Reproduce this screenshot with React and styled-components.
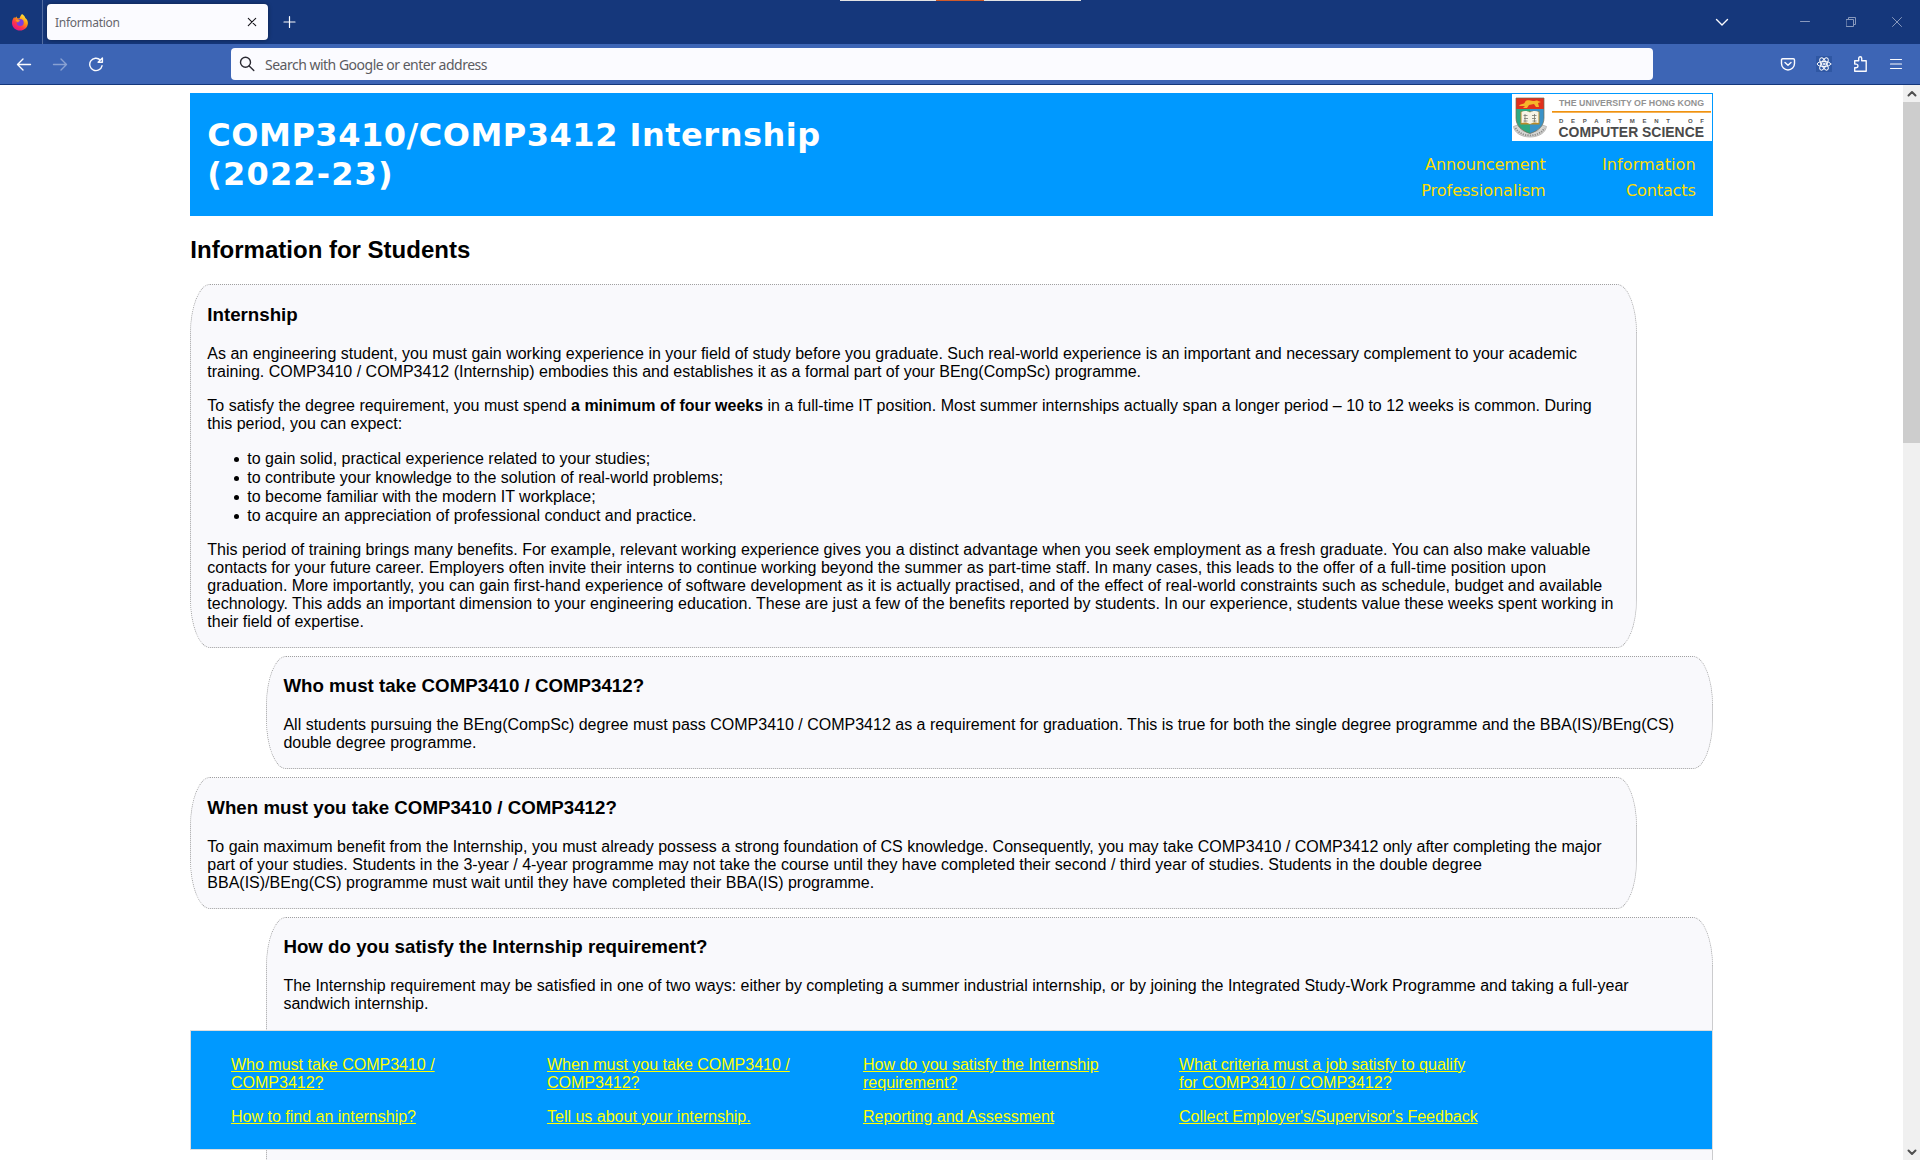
import React from "react";
import styled, { createGlobalStyle } from "styled-components";

const Global = createGlobalStyle`
  html, body { margin: 0; padding: 0; background: #fff; overflow: hidden; }
  *, *::before, *::after { box-sizing: border-box; }
`;

const sans = `"Liberation Sans", Arial, sans-serif`;
const ui = `"Noto Sans", "Open Sans", sans-serif`;
const wide = `"DejaVu Sans", Verdana, sans-serif`;

const Window = styled.div`
  width: 1920px;
  height: 1160px;
  display: flex;
  flex-direction: column;
  overflow: hidden;
  position: relative;
  font-family: ${sans};
  color: #000;
`;

const TabBar = styled.div`
  height: 44px;
  flex: none;
  background: #15377b;
  display: flex;
  align-items: center;
`;

const Pinned = styled.div`
  width: 43px;
  height: 44px;
  border-right: 1px solid #536da1;
  display: flex;
  align-items: center;
  padding-left: 11px;
`;

const Tab = styled.div`
  width: 221px;
  height: 36px;
  margin-left: 4px;
  padding: 0 11px 0 8px;
  border-radius: 4px;
  background: #fbfbff;
  box-shadow: 0 0 4px rgba(0, 0, 0, 0.4);
  display: flex;
  align-items: center;
  justify-content: space-between;
`;

const TabTitle = styled.span`
  font: 12px/16px ${ui};
  color: #66666d;
  letter-spacing: -0.3px;
  padding-top: 2px;
`;

const NewTab = styled.div`
  margin-left: 13px;
  width: 18px;
  height: 18px;
`;

const WindowStrip = styled.div`
  position: absolute;
  top: 0;
  left: 840px;
  width: 241px;
  height: 1px;
  background: linear-gradient(to right, #e3e3e3 96px, #cf5a2a 96px 144px, #e3e3e3 144px);
`;

const Controls = styled.div`
  margin-left: auto;
  display: flex;
  align-items: center;
  padding-right: 15px;
`;

const Control = styled.div`
  width: 16px;
  height: 16px;
  margin-left: ${(p) => p.$gap || 0}px;
`;

const Toolbar = styled.div`
  height: 41px;
  flex: none;
  background: #3d65b5;
  border-bottom: 1px solid #15377b;
  display: flex;
  align-items: center;
  padding: 0 16px;
`;

const NavButtons = styled.div`
  width: 215px;
  display: flex;
  gap: 20px;
`;

const UrlBar = styled.div`
  width: 1422px;
  height: 32px;
  border-radius: 4px;
  background: #fbfbff;
  display: flex;
  align-items: center;
  padding-left: 8px;
  gap: 10px;
`;

const Placeholder = styled.span`
  font: 14px/20px ${ui};
  letter-spacing: -0.5px;
  color: #5b5b61;
  padding-top: 2px;
`;

const ToolIcons = styled.div`
  margin-left: auto;
  display: flex;
  gap: 20px;
`;

const Icon = styled.svg`
  display: block;
  fill: none;
  stroke: ${(p) => p.$c || "#fbfbfe"};
  stroke-width: ${(p) => p.$w || 1.4};
  stroke-linecap: round;
  stroke-linejoin: round;
  opacity: ${(p) => p.$o || 1};
`;

const View = styled.div`
  flex: 1;
  min-height: 0;
  display: flex;
`;

const Page = styled.main`
  flex: 1;
  overflow: hidden;
  padding: 8px 190.3px 0;
`;

const Scrollbar = styled.div`
  width: 17px;
  background: #f0f0f0;
  display: flex;
  flex-direction: column;
  justify-content: space-between;
`;

const Arrow = styled.div`
  height: 17px;
  display: flex;
  align-items: center;
  justify-content: center;
`;

const Thumb = styled.div`
  height: 341px;
  background: #cdcdcd;
  margin-bottom: auto;
`;

const Banner = styled.header`
  height: 123px;
  background: #0099ff;
  padding: 1px 1px 1px 17px;
  display: flex;
  justify-content: space-between;
`;

const Title = styled.h1`
  margin: 22.4px 0 0;
  font: bold 32px/39px ${wide};
  color: #fff;
  white-space: nowrap;
`;

const TitleLine = styled.span`
  display: block;
  letter-spacing: ${(p) => p.$ls}px;
`;

const BannerSide = styled.div`
  display: flex;
  flex-direction: column;
  align-items: flex-end;
`;

const Logo = styled.svg`
  display: block;
  background: #fff;
  overflow: visible;
`;

const Menu = styled.nav`
  display: grid;
  grid-template-columns: 150px 150px;
  padding: 11px 16px 0 0;
  text-align: right;
`;

const MenuLink = styled.a`
  font: 16px/26px ${wide};
  letter-spacing: ${(p) => p.$ls || 0}px;
  color: #ffdd00;
  white-space: nowrap;
`;

const PageTitle = styled.h2`
  margin: 20px 0 21px;
  font: bold 24px/27px ${sans};
`;

const Card = styled.section`
  display: flow-root;
  width: 95%;
  margin: 0 0 8px ${(p) => (p.$right ? "5%" : "0")};
  padding: 0 16px;
  border: 1px dotted #a0a0a0;
  border-radius: 20px / 50px;
  background: #f9f9fc;
  height: ${(p) => (p.$h ? `${p.$h}px` : "auto")};

  h3 {
    margin: 18.7px 0;
    font: bold 18.72px/22.2px ${sans};
  }
  p {
    margin: 16px 0;
    font: 16px/18px ${sans};
    white-space: nowrap;
  }
  ul {
    margin: 16px 0;
    padding-left: 40px;
    list-style: none;
  }
  li {
    font: 16px/19px ${sans};
  }
  li::before {
    content: "";
    display: inline-block;
    width: 5px;
    height: 5px;
    margin: 0 8px 0 -13px;
    border-radius: 50%;
    background: #000;
    vertical-align: 2px;
  }
`;

const Quick = styled.nav`
  position: absolute;
  left: 190px;
  bottom: 10px;
  width: 1523px;
  height: 120px;
  padding: 25px 40px 0;
  background: #0099ff;
  border: 1px solid #dddddd;
  display: grid;
  grid-template-columns: repeat(4, 316px);
  row-gap: 16px;
  align-content: start;

  a {
    font: 16px/18px ${sans};
    color: #ffff00;
    text-decoration: underline;
    white-space: nowrap;
  }
`;

const QuickItem = styled.div`
  font: 16px/18px ${sans};
`;

const links = [
  ["Who must take COMP3410 /", "COMP3412?"],
  ["When must you take COMP3410 /", "COMP3412?"],
  ["How do you satisfy the Internship", "requirement?"],
  ["What criteria must a job satisfy to qualify", "for COMP3410 / COMP3412?"],
  ["How to find an internship?"],
  ["Tell us about your internship."],
  ["Reporting and Assessment"],
  ["Collect Employer's/Supervisor's Feedback"],
];

const Lines = ({ of }) =>
  of.map((t, i) => (
    <React.Fragment key={i}>
      {i > 0 && <br />}
      {t}
    </React.Fragment>
  ));

const Firefox = () => (
  <svg width="18" height="18" viewBox="0 0 18 18">
    <defs>
      <linearGradient id="ff" x1="0.85" y1="0.05" x2="0.25" y2="0.95">
        <stop offset="0" stopColor="#fff044" />
        <stop offset="0.4" stopColor="#ff980e" />
        <stop offset="0.7" stopColor="#ff3647" />
        <stop offset="1" stopColor="#e31587" />
      </linearGradient>
    </defs>
    <path d="M11 1c2 1.500 3 2.600 3.300 4 1.700 1.200 2.700 3.200 2.600 5.300C16.700 14.600 13.300 17.600 9 17.600S1 14.400 1 10c0-2.400.9-4.500 2.300-6l.5 1.200L5.400 3.600l.9 1.700 2 .2C9.300 4.400 9.300 2.400 11 1z" fill="url(#ff)" />
    <circle cx="9.200" cy="9.600" r="3.500" fill="#7a3ee0" />
    <path d="M4.800 7.200c1.800-.9 3.600-.4 4.300.9-1 .1-1.700.6-1.800 1.300-1-.2-2-.9-2.500-2.200z" fill="#ff9a1a" />
  </svg>
);

const Shield = () => (
  <g>
    <path d="M1.500 32.500c1 6.500 8 10.500 16.500 10.500s15.500-4 16.500-10.500l-4-1.500-5 6H10.500l-5-6z" fill="#d6d6d4" stroke="#9a9a98" strokeWidth="0.600" />
    <path d="M3.500 34c3 5 8 7.300 14.500 7.300S29.500 39 32.500 34" fill="none" stroke="#8d8d8b" strokeDasharray="1.300 1.100" strokeWidth="1.800" />
    <path d="M4 4h14v35.500C10 37 4 32 4 24z" fill="#2fa882" />
    <path d="M18 4h14v20c0 8-6 13-14 15.500z" fill="#3a92c8" />
    <path d="M4 4h28v11H4z" fill="#e0301e" />
    <path d="M7 12c2-3 5-1 6-4 2-3 5-1 8-1s4-1 5 0l3 1-3 1 1 4h-3l-2-3-5 1-2 3h-4l2-2z" fill="#f6b62a" />
    <path d="M8.500 17.500h19v13h-19z" fill="#b98a2a" />
    <path d="M9.500 18c3-1.500 6-1 8.500.6 2.500-1.600 5.500-2.100 8.500-.6v11c-3-1-6-.6-8.500 1-2.500-1.600-5.500-2-8.500-1z" fill="#f7f3e6" />
    <path d="M11.500 21.500h4M12 24.500h4M11.500 27h4M20 21.500h4.500M20 24.500h4M20.500 27h4M13 20v8M22.500 20v8" stroke="#77776f" strokeWidth="0.800" />
    <path d="M4 4h28v20c0 8-6 13-14 15.500C10 37 4 32 4 24z" fill="none" stroke="#6d6a50" strokeWidth="0.700" />
  </g>
);

const DeptLogo = () => (
  <Logo width="200" height="47" viewBox="0 0 200 47">
    <Shield />
    <text x="47" y="12.300" fontFamily="Liberation Sans" fontWeight="bold" fontSize="8.800" fill="#929292" textLength="145" lengthAdjust="spacingAndGlyphs">THE UNIVERSITY OF HONG KONG</text>
    <rect x="40" y="17" width="159" height="1.700" fill="#f0920f" />
    <text x="47" y="28.600" fontFamily="Liberation Sans" fontWeight="bold" fontSize="6" fill="#555" textLength="111" lengthAdjust="spacing">DEPARTMENT</text>
    <text x="176" y="28.600" fontFamily="Liberation Sans" fontWeight="bold" fontSize="6" fill="#555" textLength="16" lengthAdjust="spacing">OF</text>
    <text x="46.500" y="43" fontFamily="Liberation Sans" fontWeight="bold" fontSize="14.600" fill="#4a4a4a" textLength="145.500" lengthAdjust="spacingAndGlyphs">COMPUTER SCIENCE</text>
  </Logo>
);

export default function App() {
  return (
    <Window>
      <Global />
      <TabBar>
        <Pinned><Firefox /></Pinned>
        <Tab>
          <TabTitle>Information</TabTitle>
          <Icon width="10" height="10" viewBox="0 0 10 10" $c="#15141a" $w={1.1}><path d="M1.300 1.300l7.400 7.400M8.700 1.300l-7.400 7.400" /></Icon>
        </Tab>
        <NewTab>
          <Icon width="18" height="18" viewBox="0 0 18 18" $w={1.2}><path d="M8.500 3.500v11M3 9h11" /></Icon>
        </NewTab>
        <Controls>
          <Control><Icon width="16" height="16" viewBox="0 0 16 16" $w={1.4}><path d="M2.500 5.500L8 11l5.500-5.500" /></Icon></Control>
          <Control $gap={67}><Icon width="16" height="16" viewBox="0 0 16 16" $o={0.5} $w={1}><path d="M3.500 7.500h9" /></Icon></Control>
          <Control $gap={30}><Icon width="16" height="16" viewBox="0 0 16 16" $o={0.5} $w={1}><path d="M3.500 5.500h7v7h-7zM5.500 5.500v-2h7v7h-2" /></Icon></Control>
          <Control $gap={30}><Icon width="16" height="16" viewBox="0 0 16 16" $o={0.5} $w={1}><path d="M3.500 3.500l9 9M12.500 3.500l-9 9" /></Icon></Control>
        </Controls>
      </TabBar>
      <WindowStrip />
      <Toolbar>
        <NavButtons>
          <Icon width="16" height="16" viewBox="0 0 16 16"><path d="M14.500 8.500H1.500M7 3L1.500 8.500 7 14" /></Icon>
          <Icon width="16" height="16" viewBox="0 0 16 16" $o={0.4}><path d="M1.500 8.500h13M9 3l5.500 5.500L9 14" /></Icon>
          <Icon width="16" height="16" viewBox="0 0 16 16"><path d="M14 9.800A6.200 6.200 0 1 1 12.300 4M14.400 2v4.300h-4.300z" /></Icon>
        </NavButtons>
        <UrlBar>
          <Icon width="16" height="16" viewBox="0 0 16 16" $c="#2b2a33" $w={1.4}><circle cx="6.500" cy="6.300" r="5" /><path d="M10.200 10l4.600 4.600" /></Icon>
          <Placeholder>Search with Google or enter address</Placeholder>
        </UrlBar>
        <ToolIcons>
          <Icon width="16" height="16" viewBox="0 0 16 16"><path d="M2.700 2.700h10.600a1.200 1.200 0 0 1 1.200 1.200v3.600a6.500 6.500 0 0 1-13 0V3.900a1.200 1.200 0 0 1 1.200-1.200zM5 6.500l3 2.800 3-2.800" /></Icon>
          <Icon width="16" height="16" viewBox="0 0 16 16" $w={1}>
            <rect width="16" height="16" fill="#2f57a3" stroke="none" />
            <ellipse cx="8" cy="8" rx="6.800" ry="2.600" />
            <ellipse cx="8" cy="8" rx="6.800" ry="2.600" transform="rotate(60 8 8)" />
            <ellipse cx="8" cy="8" rx="6.800" ry="2.600" transform="rotate(120 8 8)" />
            <circle cx="8" cy="8" r="1" />
          </Icon>
          <Icon width="16" height="16" viewBox="0 0 16 16"><path d="M2.700 15.200v-3.500h1.500a1.800 1.800 0 0 0 0-3.600H2.700V4.700h4V2.300a1.500 1.500 0 0 1 3 0v2.400h4.500v10.500z" /></Icon>
          <Icon width="16" height="16" viewBox="0 0 16 16" $w={1.2}><path d="M2.500 3.500h11M2.500 8h11M2.500 12.500h11" /></Icon>
        </ToolIcons>
      </Toolbar>
      <View>
        <Page>
          <Banner>
            <Title>
              <TitleLine $ls={0.52}>COMP3410/COMP3412 Internship</TitleLine>
              <TitleLine $ls={1.15}>(2022-23)</TitleLine>
            </Title>
            <BannerSide>
              <DeptLogo />
              <Menu>
                <MenuLink $ls={-0.1}>Announcement</MenuLink>
                <MenuLink $ls={0.1}>Information</MenuLink>
                <MenuLink>Professionalism</MenuLink>
                <MenuLink $ls={-0.1}>Contacts</MenuLink>
              </Menu>
            </BannerSide>
          </Banner>
          <PageTitle>Information for Students</PageTitle>
          <Card>
            <h3>Internship</h3>
            <p><Lines of={[
              "As an engineering student, you must gain working experience in your field of study before you graduate. Such real-world experience is an important and necessary complement to your academic",
              "training. COMP3410 / COMP3412 (Internship) embodies this and establishes it as a formal part of your BEng(CompSc) programme.",
            ]} /></p>
            <p>To satisfy the degree requirement, you must spend <b>a minimum of four weeks</b> in a full-time IT position. Most summer internships actually span a longer period – 10 to 12 weeks is common. During<br />this period, you can expect:</p>
            <ul>
              <li>to gain solid, practical experience related to your studies;</li>
              <li>to contribute your knowledge to the solution of real-world problems;</li>
              <li>to become familiar with the modern IT workplace;</li>
              <li>to acquire an appreciation of professional conduct and practice.</li>
            </ul>
            <p><Lines of={[
              "This period of training brings many benefits. For example, relevant working experience gives you a distinct advantage when you seek employment as a fresh graduate. You can also make valuable",
              "contacts for your future career. Employers often invite their interns to continue working beyond the summer as part-time staff. In many cases, this leads to the offer of a full-time position upon",
              "graduation. More importantly, you can gain first-hand experience of software development as it is actually practised, and of the effect of real-world constraints such as schedule, budget and available",
              "technology. This adds an important dimension to your engineering education. These are just a few of the benefits reported by students. In our experience, students value these weeks spent working in",
              "their field of expertise.",
            ]} /></p>
          </Card>
          <Card $right>
            <h3>Who must take COMP3410 / COMP3412?</h3>
            <p><Lines of={[
              "All students pursuing the BEng(CompSc) degree must pass COMP3410 / COMP3412 as a requirement for graduation. This is true for both the single degree programme and the BBA(IS)/BEng(CS)",
              "double degree programme.",
            ]} /></p>
          </Card>
          <Card>
            <h3>When must you take COMP3410 / COMP3412?</h3>
            <p><Lines of={[
              "To gain maximum benefit from the Internship, you must already possess a strong foundation of CS knowledge. Consequently, you may take COMP3410 / COMP3412 only after completing the major",
              "part of your studies. Students in the 3-year / 4-year programme may not take the course until they have completed their second / third year of studies. Students in the double degree",
              "BBA(IS)/BEng(CS) programme must wait until they have completed their BBA(IS) programme.",
            ]} /></p>
          </Card>
          <Card $right $h={500}>
            <h3>How do you satisfy the Internship requirement?</h3>
            <p><Lines of={[
              "The Internship requirement may be satisfied in one of two ways: either by completing a summer industrial internship, or by joining the Integrated Study-Work Programme and taking a full-year",
              "sandwich internship.",
            ]} /></p>
          </Card>
        </Page>
        <Scrollbar>
          <Arrow><Icon width="10" height="10" viewBox="0 0 10 10" $c="#505050" $w={2}><path d="M1.500 6.500L5 3l3.500 3.500" /></Icon></Arrow>
          <Thumb />
          <Arrow><Icon width="10" height="10" viewBox="0 0 10 10" $c="#505050" $w={2}><path d="M1.500 3.500L5 7l3.500-3.500" /></Icon></Arrow>
        </Scrollbar>
      </View>
      <Quick>
        {links.map((l) => <QuickItem key={l[0]}><a><Lines of={l} /></a></QuickItem>)}
      </Quick>
    </Window>
  );
}
